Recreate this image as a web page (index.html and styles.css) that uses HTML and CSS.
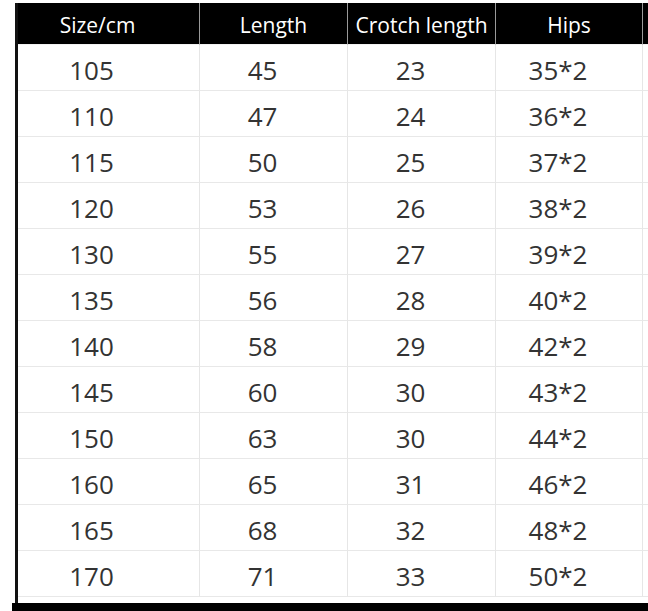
FILE: index.html
```html
<!DOCTYPE html>
<html>
<head>
<meta charset="utf-8">
<link rel="stylesheet" href="styles.css">
</head>
<body>
<div class="page">
  <div class="chart">
    <div class="cell head first">Size/cm</div>
    <div class="cell head">Length</div>
    <div class="cell head">Crotch length</div>
    <div class="cell head">Hips</div>
    <div class="cell head stub"></div>

    <div class="cell first">105</div><div class="cell">45</div><div class="cell">23</div><div class="cell">35*2</div><div class="cell stub"></div>
    <div class="cell first">110</div><div class="cell">47</div><div class="cell">24</div><div class="cell">36*2</div><div class="cell stub"></div>
    <div class="cell first">115</div><div class="cell">50</div><div class="cell">25</div><div class="cell">37*2</div><div class="cell stub"></div>
    <div class="cell first">120</div><div class="cell">53</div><div class="cell">26</div><div class="cell">38*2</div><div class="cell stub"></div>
    <div class="cell first">130</div><div class="cell">55</div><div class="cell">27</div><div class="cell">39*2</div><div class="cell stub"></div>
    <div class="cell first">135</div><div class="cell">56</div><div class="cell">28</div><div class="cell">40*2</div><div class="cell stub"></div>
    <div class="cell first">140</div><div class="cell">58</div><div class="cell">29</div><div class="cell">42*2</div><div class="cell stub"></div>
    <div class="cell first">145</div><div class="cell">60</div><div class="cell">30</div><div class="cell">43*2</div><div class="cell stub"></div>
    <div class="cell first">150</div><div class="cell">63</div><div class="cell">30</div><div class="cell">44*2</div><div class="cell stub"></div>
    <div class="cell first">160</div><div class="cell">65</div><div class="cell">31</div><div class="cell">46*2</div><div class="cell stub"></div>
    <div class="cell first">165</div><div class="cell">68</div><div class="cell">32</div><div class="cell">48*2</div><div class="cell stub"></div>
    <div class="cell first">170</div><div class="cell">71</div><div class="cell">33</div><div class="cell">50*2</div><div class="cell stub"></div>
  </div>
  <div class="base"></div>
</div>
</body>
</html>
```
FILE: styles.css
```css
html, body {
  margin: 0;
  padding: 0;
  background: #ffffff;
}

.page {
  width: 648px;
  height: 611px;
  padding-top: 3px;
  box-sizing: border-box;
  display: flex;
  flex-direction: column;
  font-family: "Open Sans", "Noto Sans", sans-serif;
  overflow: hidden;
}

.chart {
  margin-left: 15px;
  border-left: 3px solid #111111;
  display: grid;
  grid-template-columns: 182px 148px 148px 147px 5px;
  grid-template-rows: 42px repeat(12, 46px);
  padding-bottom: 6px;
}

.cell {
  display: flex;
  align-items: center;
  justify-content: center;
  padding-right: 22px;
  box-sizing: border-box;
  border-right: 1px solid #e6e6e6;
  border-bottom: 1px solid #e8e8e8;
  font-size: 26px;
  color: #333333;
  padding-top: 4px;
}

.cell.first {
  padding-right: 34px;
}

.cell.head {
  background: #000000;
  color: #ffffff;
  font-size: 21px;
  padding-right: 0;
  padding-top: 2px;
  border-right: 1px solid #9a9a9a;
  border-bottom: 1px solid #f2f2f2;
}

.cell.head.first {
  padding-right: 22px;
}

.cell.stub {
  padding: 0;
  border-right: none;
}

.cell.head.stub {
  border-right: none;
  background: #000000;
}

.base {
  margin-left: 12px;
  flex: 1;
  background: #000000;
}
```
